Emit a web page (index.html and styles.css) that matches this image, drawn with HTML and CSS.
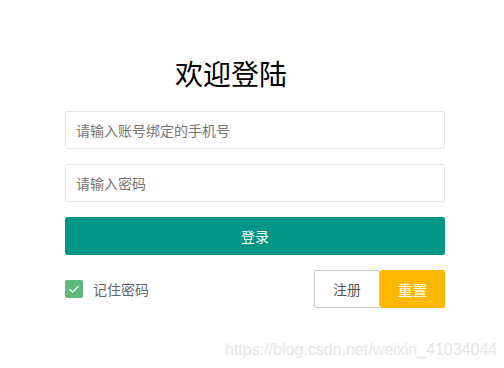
FILE: index.html
```html
<!DOCTYPE html>
<html lang="zh-CN">
<head>
    <meta charset="UTF-8">
    <meta name="viewport" content="width=device-width, initial-scale=1.0">
    <title>欢迎登陆</title>
    <link rel="stylesheet" href="styles.css">
</head>

<body>
    <div class="login-box">
        <h2 class="login-title">欢迎登陆</h2>

        <form class="login-form">
            <input class="field" type="text" placeholder="请输入账号绑定的手机号">
            <input class="field" type="password" placeholder="请输入密码">
            <button class="btn btn-submit" type="button">登录</button>

            <div class="form-foot">
                <label class="remember">
                    <span class="check-icon">
                        <svg width="12" height="12" viewBox="0 0 12 12">
                            <path d="M1.5 6.2 L4.6 9.2 L10.5 3.2" fill="none" stroke="#fff" stroke-width="1.3"/>
                        </svg>
                    </span>
                    <span>记住密码</span>
                </label>

                <div class="btn-group">
                    <button class="btn btn-plain" type="button">注册</button>
                    <button class="btn btn-warm" type="reset">重置</button>
                </div>
            </div>
        </form>
    </div>

    <div class="watermark">https://blog.csdn.net/weixin_41034044</div>
</body>
</html>
```

FILE: styles.css
```css
body {
    margin: 0;
    font-family: "Noto Sans CJK SC", "Liberation Sans", sans-serif;
    background: #fff;
    color: #333;
}

.login-box {
    width: 380px;
    margin-left: 65px;
    padding-top: 53px;
}

.login-title {
    margin: 0 0 18px 110px;
    font-size: 28px;
    font-weight: normal;
    line-height: 40px;
    color: #000;
}

.login-form {
    display: flex;
    flex-direction: column;
    gap: 15px;
}

.field {
    box-sizing: border-box;
    height: 38px;
    padding: 0 10px;
    border: 1px solid #e6e6e6;
    border-radius: 2px;
    font-family: inherit;
    font-size: 14px;
    color: #333;
    outline: none;
}

.field::placeholder {
    color: #757575;
}

.btn {
    box-sizing: border-box;
    height: 38px;
    padding: 0 18px;
    border: 1px solid transparent;
    border-radius: 2px;
    font-family: inherit;
    font-size: 14px;
    white-space: nowrap;
    cursor: pointer;
}

.btn-submit {
    width: 100%;
    background: #009688;
    color: #fff;
}

.form-foot {
    display: flex;
    justify-content: space-between;
    align-items: center;
}

.remember {
    display: flex;
    align-items: center;
    gap: 10px;
    font-size: 14px;
    color: #666;
}

.check-icon {
    width: 18px;
    height: 18px;
    border-radius: 2px;
    background: #5fb878;
    display: flex;
    align-items: center;
    justify-content: center;
}

.btn-group {
    display: flex;
}

.btn-plain {
    width: 66px;
    padding: 0;
    background: #fff;
    border-color: #c9c9c9;
    color: #555;
}

.btn-warm {
    width: 65px;
    padding: 0;
    background: #ffb800;
    color: #fff;
    font-size: 15px;
}

.watermark {
    position: absolute;
    left: 225px;
    top: 341px;
    font-family: "Liberation Sans", Arial, sans-serif;
    font-size: 16px;
    color: #e6e6e6;
}
```
